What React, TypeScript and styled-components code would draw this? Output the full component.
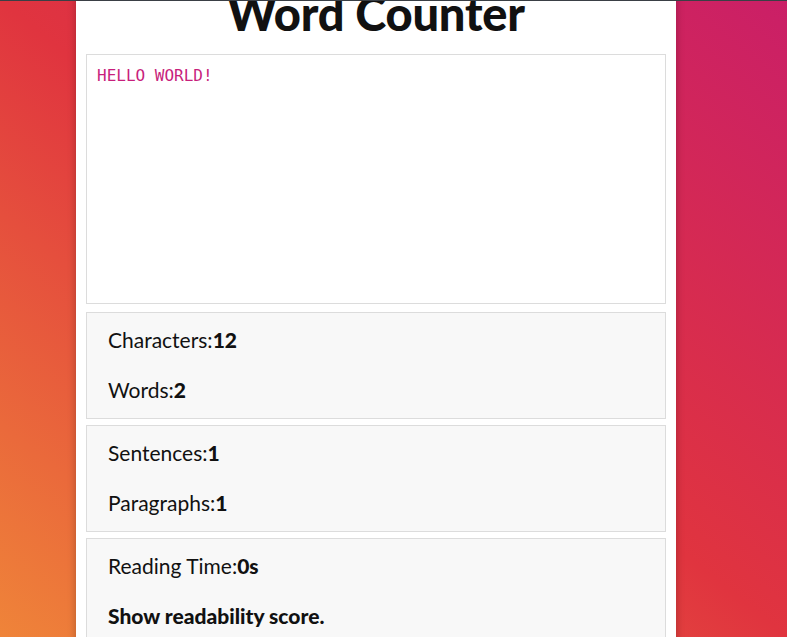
import React, { useState } from "react";
import styled, { createGlobalStyle } from "styled-components";

const Global = createGlobalStyle`
  html, body { margin: 0; padding: 0; height: 100%; }
  body {
    font-family: Lato, "Open Sans", sans-serif;
    color: #111;
    background: linear-gradient(to top right, #ef8439 0%, #e0343f 50%, #ca1f67 100%) fixed;
    overflow: hidden;
    padding-right: 35px;
    box-sizing: border-box;
  }
  #root { min-height: 100%; }
`;

const TopLine = styled.div`
  position: fixed;
  top: 0;
  left: 0;
  right: 0;
  height: 1px;
  background: #3a3f45;
  z-index: 10;
`;

const Page = styled.div`
  width: 600px;
  margin: -24px auto 0;
  background: #fff;
  box-shadow: 0 0 8px rgba(0, 0, 0, 0.25);
  padding: 0 10px 20px;
  box-sizing: border-box;
  min-height: 700px;
`;

const Title = styled.h1`
  margin: 0;
  padding-top: 6px;
  text-align: center;
  font-size: 47px;
  font-weight: 900;
  line-height: 62px;
  letter-spacing: -0.2px;
  color: #111;
`;

const Editor = styled.textarea`
  display: block;
  width: 100%;
  height: 250px;
  box-sizing: border-box;
  margin: 10px 0 8px;
  padding: 10px;
  border: 1px solid #dcdcdc;
  resize: none;
  outline: none;
  font-family: "DejaVu Sans Mono", "Liberation Mono", monospace;
  font-size: 16px;
  line-height: 22px;
  color: #c81f7c;
`;

const Stats = styled.div`
  display: flex;
  flex-direction: column;
  gap: 6px;
`;

const Box = styled.div`
  display: flex;
  flex-direction: column;
  gap: 20px;
  background: #f8f8f8;
  border: 1px solid #dcdcdc;
  padding: 12px 21px 13px;
`;

const Line = styled.div<{ $strong?: boolean }>`
  font-size: 21px;
  line-height: 30px;
  font-weight: ${(p) => (p.$strong ? 900 : 400)};
  color: #111;
  b { font-weight: 900; }
`;

export default function App() {
  const [text, setText] = useState("HELLO WORLD!");
  return (
    <>
      <Global />
      <TopLine />
      <Page>
        <Title>Word Counter</Title>
        <Editor value={text} onChange={(e) => setText(e.target.value)} spellCheck={false} />
        <Stats>
          <Box>
            <Line>Characters:<b>12</b></Line>
            <Line>Words:<b>2</b></Line>
          </Box>
          <Box>
            <Line>Sentences:<b>1</b></Line>
            <Line>Paragraphs:<b>1</b></Line>
          </Box>
          <Box>
            <Line>Reading Time:<b>0s</b></Line>
            <Line $strong>Show readability score.</Line>
          </Box>
        </Stats>
      </Page>
    </>
  );
}
